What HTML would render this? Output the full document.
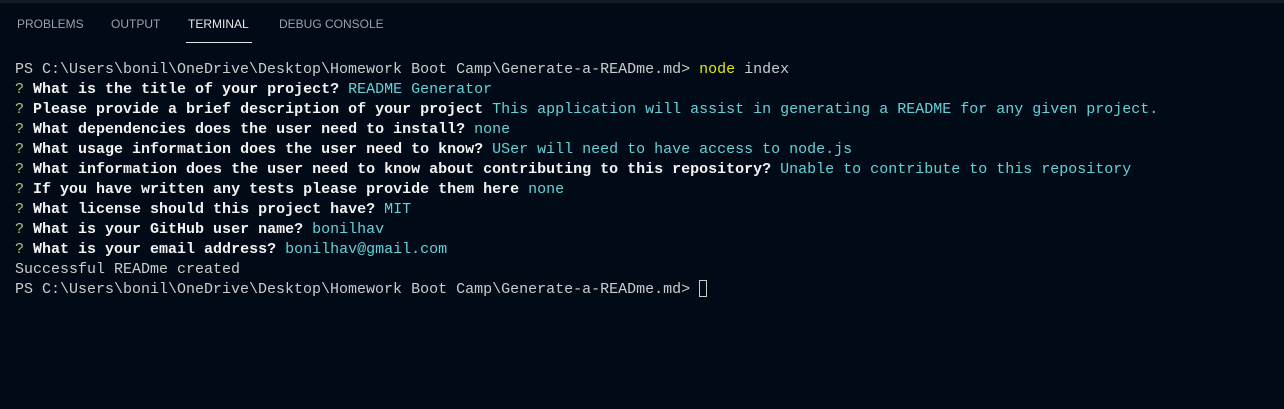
<!DOCTYPE html>
<html><head><style>
body{margin:0;width:1284px;height:409px;background:#010b17;overflow:hidden;position:relative;font-family:"Liberation Sans",sans-serif}
.top{position:absolute;left:0;top:0;width:1284px;height:3px;background:#141a24}
.tab{position:absolute;top:17px;font-size:12px;color:#9ba0a8;letter-spacing:0}
.ul{position:absolute;left:186px;top:42px;width:66px;height:1px;background:#e6e6e6}
.term{position:absolute;left:15px;top:60px;font-family:"Liberation Mono",monospace;font-size:15px;line-height:20px;color:#cccccc;white-space:pre}
.q{color:#b5c46b}
b{color:#f2f2f2}
.a{color:#63d3d8}
.y{color:#e5e510}
.cur{display:inline-block;width:8px;height:17px;border:1px solid #cccccc;vertical-align:-4px;box-sizing:border-box}
</style></head><body>
<div class="top"></div>
<div class="tab" style="left:17px">PROBLEMS</div>
<div class="tab" style="left:111px">OUTPUT</div>
<div class="tab" style="left:188px;color:#e8e8e8">TERMINAL</div>
<div class="tab" style="left:279px">DEBUG CONSOLE</div>
<div class="ul"></div>
<div class="term">PS C:\Users\bonil\OneDrive\Desktop\Homework Boot Camp\Generate-a-READme.md> <span class="y">node</span> index
<span class="q">?</span> <b>What is the title of your project?</b> <span class="a">README Generator</span>
<span class="q">?</span> <b>Please provide a brief description of your project</b> <span class="a">This application will assist in generating a README for any given project.</span>
<span class="q">?</span> <b>What dependencies does the user need to install?</b> <span class="a">none</span>
<span class="q">?</span> <b>What usage information does the user need to know?</b> <span class="a">USer will need to have access to node.js</span>
<span class="q">?</span> <b>What information does the user need to know about contributing to this repository?</b> <span class="a">Unable to contribute to this repository</span>
<span class="q">?</span> <b>If you have written any tests please provide them here</b> <span class="a">none</span>
<span class="q">?</span> <b>What license should this project have?</b> <span class="a">MIT</span>
<span class="q">?</span> <b>What is your GitHub user name?</b> <span class="a">bonilhav</span>
<span class="q">?</span> <b>What is your email address?</b> <span class="a">bonilhav@gmail.com</span>
Successful READme created
PS C:\Users\bonil\OneDrive\Desktop\Homework Boot Camp\Generate-a-READme.md> <span class="cur"></span></div>
</body></html>
